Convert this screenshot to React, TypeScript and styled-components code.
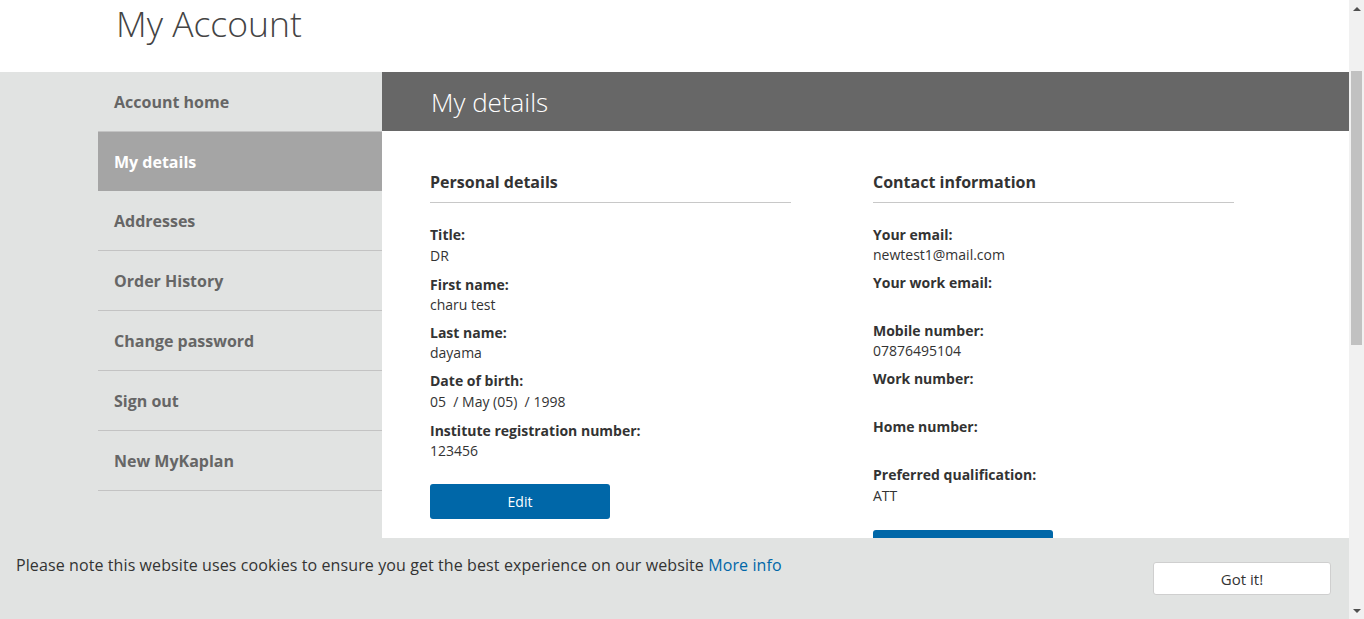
import React from "react";
import styled, { createGlobalStyle } from "styled-components";

const Global = createGlobalStyle`
  body {
    margin: 0;
    font-family: "Open Sans", "Liberation Sans", Arial, sans-serif;
    color: #333;
    background: #fff;
  }
  * { box-sizing: border-box; }
`;

const Page = styled.div`
  margin-right: 15px;
`;

const TitleBar = styled.header`
  height: 72px;
  padding-left: 116px;
  display: flex;
  align-items: flex-start;
  background: #fff;
`;

const PageTitle = styled.h1`
  margin: 0;
  font-size: 35.5px;
  line-height: 46px;
  font-weight: 300;
  color: #444;
`;

const Main = styled.div`
  display: flex;
  min-height: 1127px;
  background: #e1e3e2;
  padding-left: 98px;
`;

const Sidebar = styled.nav`
  width: 284px;
  flex-shrink: 0;
  display: flex;
  flex-direction: column;
`;

const NavItem = styled.a<{ $active?: boolean }>`
  display: flex;
  align-items: center;
  height: ${(p) => (p.$active ? "59px" : "60px")};
  padding: 0 16px;
  font-size: 16px;
  font-weight: 700;
  text-decoration: none;
  color: ${(p) => (p.$active ? "#fff" : "#666")};
  background: ${(p) => (p.$active ? "#a5a5a5" : "transparent")};
  border-bottom: ${(p) => (p.$active ? "none" : "1px solid #c3c3c3")};
`;

const Content = styled.section`
  flex: 1;
  background: #fff;
`;

const ContentHeader = styled.div`
  height: 59px;
  background: #676767;
  padding-left: 49px;
  display: flex;
  align-items: center;
`;

const ContentTitle = styled.h2`
  margin: 0;
  font-size: 26px;
  font-weight: 300;
  color: #fff;
`;

const Columns = styled.div`
  display: grid;
  grid-template-columns: 361px 361px;
  column-gap: 82px;
  padding: 40px 48px 40px;
`;

const Column = styled.div`
  display: flex;
  flex-direction: column;
  align-items: flex-start;
`;

const SectionHeading = styled.h3`
  margin: 0 0 22px;
  width: 100%;
  font-size: 16px;
  line-height: 22px;
  font-weight: 700;
  color: #333;
  padding-bottom: 9px;
  border-bottom: 1px solid #c8c8c8;
`;

const Field = styled.div`
  margin-bottom: 8px;
`;

const Label = styled.div`
  font-size: 14px;
  line-height: 20px;
  font-weight: 700;
  color: #333;
`;

const Value = styled.div<{ $tall?: boolean }>`
  font-size: 14px;
  line-height: ${(p) => (p.$tall ? "22px" : "20px")};
  color: #333;
  min-height: 20px;
`;

const PrimaryButton = styled.button`
  margin-top: 15px;
  width: 180px;
  height: 35px;
  border: none;
  border-radius: 3px;
  background: #0067a8;
  color: #fff;
  font-family: inherit;
  font-size: 14px;
`;

const CookieBar = styled.div`
  position: fixed;
  left: 0;
  right: 15px;
  bottom: 0;
  height: 81px;
  background: #e1e3e2;
  display: flex;
  justify-content: space-between;
  align-items: flex-start;
  padding: 16px 18px 0 16px;
`;

const CookieText = styled.p`
  margin: 0;
  font-size: 16px;
  letter-spacing: 0.1px;
  line-height: 22px;
  color: #333;
`;

const CookieLink = styled.a`
  color: #0067a8;
  text-decoration: none;
`;

const GotIt = styled.button`
  margin-top: 8px;
  width: 178px;
  height: 33px;
  background: #fff;
  border: 1px solid #cfcfcf;
  border-radius: 3px;
  font-family: inherit;
  font-size: 15px;
  color: #333;
`;

/* Browser scrollbar drawn at the right edge of the viewport */
const ScrollRail = styled.div`
  position: fixed;
  top: 0;
  right: 0;
  bottom: 0;
  width: 15px;
  background: #f1f1f1;
  display: flex;
  flex-direction: column;
  align-items: center;
`;

const RailButton = styled.div`
  height: 17px;
  width: 15px;
  display: flex;
  align-items: center;
  justify-content: center;
  flex-shrink: 0;
`;

const RailTrack = styled.div`
  flex: 1;
  width: 100%;
  padding: 54px 2px 0;
`;

const RailThumb = styled.div`
  height: 274px;
  background: #c1c1c1;
`;

type Row = { label: string; value: string; tall?: boolean };

const personal: Row[] = [
  { label: "Title:", value: "DR", tall: true },
  { label: "First name:", value: "charu test" },
  { label: "Last name:", value: "dayama" },
  { label: "Date of birth:", value: "05\u00a0 / May (05)\u00a0 / 1998", tall: true },
  { label: "Institute registration number:", value: "123456" },
];

const contact: Row[] = [
  { label: "Your email:", value: "newtest1@mail.com" },
  { label: "Your work email:", value: "" },
  { label: "Mobile number:", value: "07876495104" },
  { label: "Work number:", value: "" },
  { label: "Home number:", value: "" },
  { label: "Preferred qualification:", value: "ATT", tall: true },
];

const nav = [
  "Account home",
  "My details",
  "Addresses",
  "Order History",
  "Change password",
  "Sign out",
  "New MyKaplan",
];

function Fields({ rows }: { rows: Row[] }) {
  return (
    <>
      {rows.map((r) => (
        <Field key={r.label}>
          <Label>{r.label}</Label>
          <Value $tall={r.tall}>{r.value || "\u00a0"}</Value>
        </Field>
      ))}
    </>
  );
}

export default function App() {
  return (
    <>
      <Global />
      <Page>
        <TitleBar>
          <PageTitle>My Account</PageTitle>
        </TitleBar>
        <Main>
          <Sidebar>
            {nav.map((n) => (
              <NavItem key={n} href="#" $active={n === "My details"}>
                {n}
              </NavItem>
            ))}
          </Sidebar>
          <Content>
            <ContentHeader>
              <ContentTitle>My details</ContentTitle>
            </ContentHeader>
            <Columns>
              <Column>
                <SectionHeading>Personal details</SectionHeading>
                <Fields rows={personal} />
                <PrimaryButton>Edit</PrimaryButton>
              </Column>
              <Column>
                <SectionHeading>Contact information</SectionHeading>
                <Fields rows={contact} />
                <PrimaryButton>Edit</PrimaryButton>
              </Column>
            </Columns>
          </Content>
        </Main>
      </Page>
      <CookieBar>
        <CookieText>
          Please note this website uses cookies to ensure you get the best experience on our website{" "}
          <CookieLink href="#">More info</CookieLink>
        </CookieText>
        <GotIt>Got it!</GotIt>
      </CookieBar>
      <ScrollRail>
        <RailButton>
          <svg width="8" height="4" viewBox="0 0 8 4">
            <path d="M0 4 L4 0 L8 4 Z" fill="#505050" />
          </svg>
        </RailButton>
        <RailTrack>
          <RailThumb />
        </RailTrack>
        <RailButton>
          <svg width="8" height="4" viewBox="0 0 8 4">
            <path d="M0 0 L8 0 L4 4 Z" fill="#505050" />
          </svg>
        </RailButton>
      </ScrollRail>
    </>
  );
}
